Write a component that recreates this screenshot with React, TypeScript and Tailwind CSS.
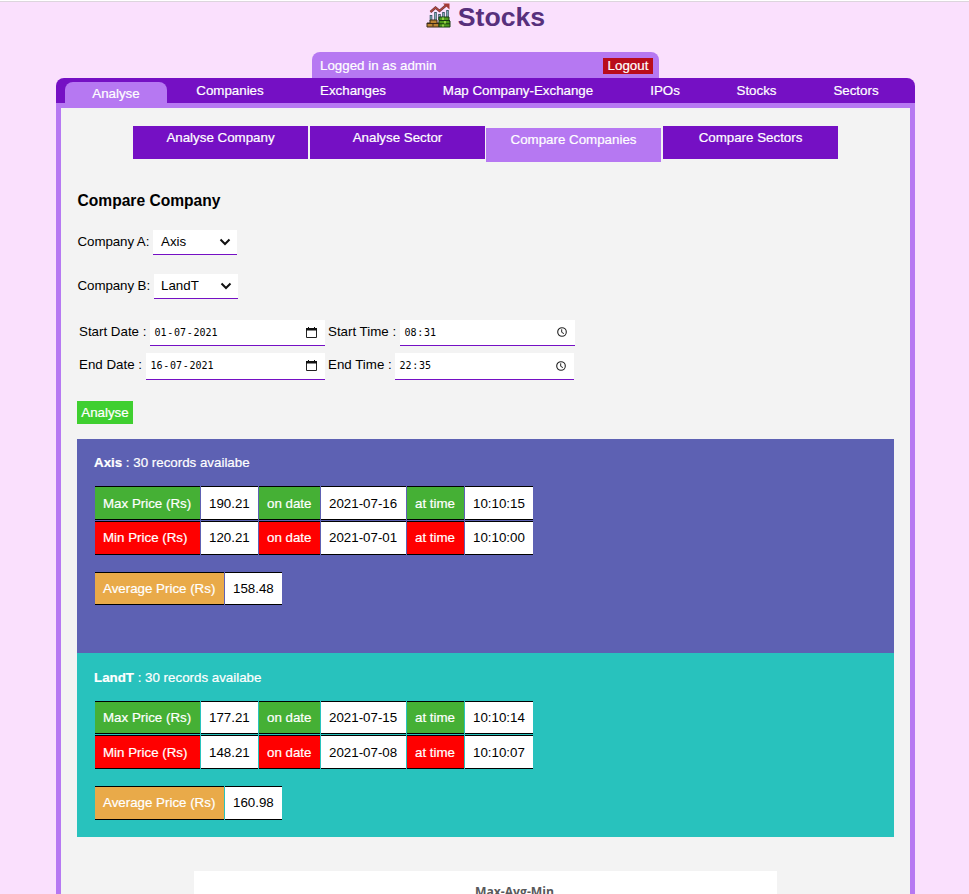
import React from "react";

const navItems = [
  { label: "Companies", cls: "w-[126px]" },
  { label: "Exchanges", cls: "w-[120px]" },
  { label: "Map Company-Exchange", cls: "w-[210px]" },
  { label: "IPOs", cls: "w-[84px]" },
  { label: "Stocks", cls: "w-[99px]" },
  { label: "Sectors", cls: "w-[100px]" },
];

function Logo() {
  return (
    <svg width="25" height="25" viewBox="0 0 25 25" className="mt-px mr-[7px]">
      <path d="M5 12v6M9.500 9v9M13.500 11v6M17.500 9v6M21.500 7v9" stroke="#3c5a66" strokeWidth="2.600" />
      <path d="M5 13v4M9.500 10v7M13.500 12v4M17.500 10v4M21.500 8v7" stroke="#7fa9b4" strokeWidth="1" />
      <path d="M4.500 9L9.500 4.500l4 3.500L20.500 2" stroke="#6b3a3f" strokeWidth="2.400" fill="none" />
      <path d="M4.500 9L9.500 4.500l4 3.500L20.500 2" stroke="#b4463e" strokeWidth="1.200" fill="none" />
      <path d="M17 .5h6.500v6z" fill="#a53a35" />
      <path d="M4 17h7v3h2v4H1v-4h3z" fill="#b98232" stroke="#3a2a17" strokeWidth="1" />
      <path d="M1 20.500h12M7 20.500v3" stroke="#3a2a17" strokeWidth="1" />
      <path d="M13 14h10v4h1v6H13z" fill="#4d9a1c" stroke="#173a12" strokeWidth="1" />
      <path d="M13 17.500h11M13 20.800h11" stroke="#173a12" strokeWidth="1" />
      <path d="M17 14.500v2.500M19 18v2.500M17 21.500v2" stroke="#93cf42" strokeWidth="2" />
    </svg>
  );
}

function Select({ value, pad }: { value: string; pad: string }) {
  return (
    <div className={"flex h-[25px] w-[84px] items-center justify-between border-b border-[#7510c4] bg-white pr-[6px] " + pad}>
      <span>{value}</span>
      <svg width="12" height="8" viewBox="0 0 12 8">
        <path d="M1.500 1.500L6 6l4.500-4.500" fill="none" stroke="#111" strokeWidth="2" />
      </svg>
    </div>
  );
}

function CalendarIcon() {
  return (
    <svg width="11" height="11" viewBox="0 0 11 11" className="mb-px">
      <path d="M.5 2h10v8.500H.5z" fill="none" stroke="#222" />
      <path d="M0 1h11v2.500H0zM2 0h1v2H2zM8 0h1v2H8z" fill="#111" />
    </svg>
  );
}

function ClockIcon() {
  return (
    <svg width="10" height="10" viewBox="0 0 10 10" className="mb-px">
      <circle cx="5" cy="5" r="4.300" fill="none" stroke="#222" strokeWidth="1.100" />
      <path d="M4.700 2.300v3l2.200 1.300" fill="none" stroke="#222" strokeWidth="1" />
    </svg>
  );
}

function Field({ children, cls, icon }: { children: React.ReactNode; cls: string; icon: React.ReactNode }) {
  return (
    <div className={"flex items-center justify-between border-b border-[#7510c4] bg-white pl-[4.500px] font-['DejaVu_Sans_Mono',monospace] text-[10px] leading-none " + cls}>
      <span>{children}</span>
      {icon}
    </div>
  );
}

const Sep = ({ c }: { c: string }) => <span className="px-[0.700px]">{c}</span>;

function Cell({ children, cls }: { children: React.ReactNode; cls: string }) {
  return <div className={"flex items-center border-y border-black pl-[8px] whitespace-nowrap " + cls}>{children}</div>;
}

function Row({ label, color, height, shift, price, date, time }: { label: string; color: string; height: string; shift: string; price: string; date: string; time: string }) {
  const head = "text-white [-webkit-text-stroke:0.2px_white] " + color + " " + shift;
  const data = "bg-white text-black " + shift;
  return (
    <div className={"flex gap-px " + height}>
      <Cell cls={"w-[105px] " + head}>{label}</Cell>
      <Cell cls={"w-[57px] " + data}>{price}</Cell>
      <Cell cls={"w-[61px] " + head}>on date</Cell>
      <Cell cls={"w-[85px] " + data}>{date}</Cell>
      <Cell cls={"w-[57px] " + head}>at time</Cell>
      <Cell cls={"w-[68px] " + data}>{time}</Cell>
    </div>
  );
}

export default function App() {
  return (
    <div className="flex h-[894px] flex-col overflow-hidden border-t border-white bg-[#fae0fd] font-['Liberation_Sans',Arial,sans-serif] text-[13.333px] leading-[16px] text-black">
      <div className="h-px shrink-0 bg-[#dcd5dd]" />
      <h1 className="flex h-[50px] shrink-0 justify-center pl-[2px] text-[26.667px] leading-[30px] font-bold text-[#57307c]">
        <Logo />
        Stocks
      </h1>
      <div className="ml-[312px] flex h-[26px] w-[347px] shrink-0 items-start justify-between rounded-t-[8px] bg-[#b678f2] pt-[6px] pr-[6px] pl-[8px] text-white [-webkit-text-stroke:0.2px_white]">
        <span>Logged in as admin</span>
        <button className="h-4 w-[50px] bg-[#b90d1c]">Logout</button>
      </div>
      <nav className="ml-[56px] flex h-[25px] w-[859px] shrink-0 rounded-t-[8px] bg-[#7510c4] pl-[9px] text-center text-white [-webkit-text-stroke:0.2px_white]">
        <div className="mt-[4px] h-[21px] w-[102px] rounded-t-[8px] bg-[#b678f2] pt-[4px]">Analyse</div>
        {navItems.map((n) => (
          <div key={n.label} className={"pt-[5px] " + n.cls}>{n.label}</div>
        ))}
      </nav>
      <main className="ml-[56px] flex w-[859px] grow flex-col border-x-[5px] border-t-[5px] border-[#b678f2] bg-[#f3f3f3] pl-[16px]">
        <div className="mt-[18px] ml-[56px] flex h-[36px] items-start text-center text-white [-webkit-text-stroke:0.2px_white]">
          <div className="mr-[2px] h-[33px] w-[175px] bg-[#7510c4] pt-[4px]">Analyse Company</div>
          <div className="mr-[1px] h-[33px] w-[175px] bg-[#7510c4] pt-[4px]">Analyse Sector</div>
          <div className="mt-[2px] mr-[2px] h-[34px] w-[175px] bg-[#b678f2] pt-[4px]">Compare Companies</div>
          <div className="h-[33px] w-[175px] bg-[#7510c4] pt-[4px]">Compare Sectors</div>
        </div>
        <h2 className="mt-[29px] h-[39px] pl-[0.500px] text-[15.6px] leading-[20px] font-bold">Compare Company</h2>
        <div className="flex h-[44px]">
          <span className="w-[76px] pt-[4px] pl-[0.500px] tracking-[-0.080px]">Company A:</span>
          <Select value="Axis" pad="pl-[8px]" />
        </div>
        <div className="flex h-[46px]">
          <span className="w-[77px] pt-[4px] pl-[0.500px] tracking-[-0.080px]">Company B:</span>
          <Select value="LandT" pad="pl-[7px]" />
        </div>
        <div className="flex h-[33px] pl-[2px]">
          <span className="w-[71px] pt-[4px]">Start Date :</span>
          <Field cls="mr-[3px] h-[26px] w-[175px] pr-[8px]" icon={<CalendarIcon />}>01<Sep c="-" />07<Sep c="-" />2021</Field>
          <span className="w-[72px] pt-[4px]">Start Time :</span>
          <Field cls="h-[26px] w-[175px] pr-[8px]" icon={<ClockIcon />}>08<Sep c=":" />31</Field>
        </div>
        <div className="flex h-[48px] pl-[2px]">
          <span className="w-[67px] pt-[4px]">End Date :</span>
          <Field cls="mr-[3px] h-[27px] w-[179px] pr-[8px]" icon={<CalendarIcon />}>16<Sep c="-" />07<Sep c="-" />2021</Field>
          <span className="w-[67px] pt-[4px]">End Time :</span>
          <Field cls="h-[27px] w-[179px] pr-[8px]" icon={<ClockIcon />}>22<Sep c=":" />35</Field>
        </div>
        <button className="mb-[15px] h-[23px] w-[56px] shrink-0 bg-[#3fcf30] text-white [-webkit-text-stroke:0.2px_white]">Analyse</button>
        <section className="h-[214px] w-[817px] shrink-0 bg-[#5d61b3] pt-[16px] pl-[17px] text-white">
          <p className="[-webkit-text-stroke:0.2px_white]"><b>Axis</b> : 30 records availabe</p>
          <div className="mt-[15px] ml-px flex flex-col gap-px">
            <Row label="Max Price (Rs)" color="bg-[#45b035]" shift="pt-px" height="h-[34px]" price="190.21" date="2021-07-16" time="10:10:15" />
            <Row label="Min Price (Rs)" color="bg-[#ff0000]" shift="pt-0" height="h-[34px]" price="120.21" date="2021-07-01" time="10:10:00" />
          </div>
          <div className="mt-[17px] ml-px flex h-[33px] gap-px">
            <Cell cls="w-[129px] bg-[#e9aa49] text-white [-webkit-text-stroke:0.2px_white]">Average Price (Rs)</Cell>
            <Cell cls="w-[57px] bg-white text-black">158.48</Cell>
          </div>
        </section>
        <section className="h-[184px] w-[817px] shrink-0 bg-[#28c2bd] pt-[17px] pl-[17px] text-white">
          <p className="[-webkit-text-stroke:0.2px_white]"><b>LandT</b> : 30 records availabe</p>
          <div className="mt-[15px] ml-px flex flex-col gap-px">
            <Row label="Max Price (Rs)" color="bg-[#45b035]" shift="pt-0" height="h-[33px]" price="177.21" date="2021-07-15" time="10:10:14" />
            <Row label="Min Price (Rs)" color="bg-[#ff0000]" shift="pt-px" height="h-[34px]" price="148.21" date="2021-07-08" time="10:10:07" />
          </div>
          <div className="mt-[17px] ml-px flex h-[34px] gap-px">
            <Cell cls="w-[129px] bg-[#e9aa49] text-white [-webkit-text-stroke:0.2px_white]">Average Price (Rs)</Cell>
            <Cell cls="w-[57px] bg-white text-black">160.98</Cell>
          </div>
        </section>
        <div className="mt-[34px] ml-[117px] h-[23px] w-[583px] shrink-0 bg-white pt-[13px] pl-[58px] text-center font-['Open_Sans',sans-serif] text-[12.200px] font-bold text-[#58595b]">
          Max-Avg-Min
        </div>
      </main>
    </div>
  );
}
